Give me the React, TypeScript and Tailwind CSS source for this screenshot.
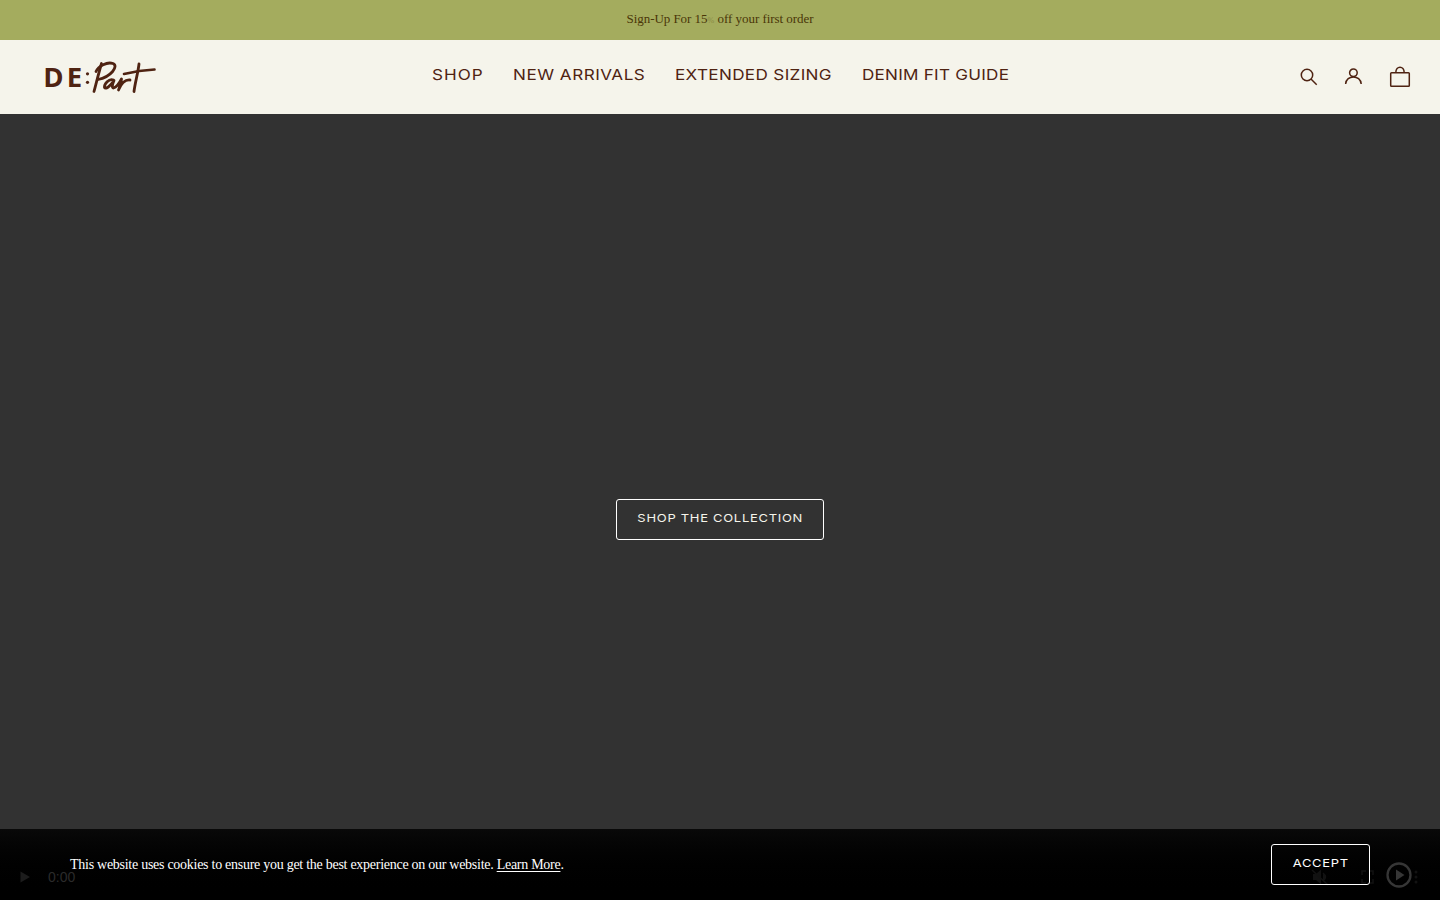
import type { ReactNode } from 'react';

const navLinks = [
  { label: 'SHOP', width: 'w-[51px]', tracking: 'tracking-[0.9px]' },
  { label: 'NEW ARRIVALS', width: 'w-[132px]', tracking: 'tracking-[0.44px]' },
  { label: 'EXTENDED SIZING', width: 'w-[157px]', tracking: 'tracking-[0.3px]' },
  { label: 'DENIM FIT GUIDE', width: 'w-[148px]', tracking: 'tracking-[0.21px]' },
];

function Logo() {
  return (
    <svg width="118" height="46" viewBox="40 54 118 46" fill="none" aria-label="DE:Part">
      <text x="43.3" y="87" fontSize="27.5" className="fill-[#4f2312] font-['Open_Sans'] font-bold">D</text>
      <text x="66.8" y="87" fontSize="27.5" className="fill-[#4f2312] font-['Open_Sans'] font-bold">E</text>
      <circle cx="87.5" cy="73.8" r="1.6" fill="#4f2312" />
      <circle cx="87.5" cy="82.3" r="1.6" fill="#4f2312" />
      <g stroke="#4f2312" strokeWidth="2.8" strokeLinecap="round" strokeLinejoin="round">
        <path d="M101.5 63.500C99 72 96.500 82 94 91.500" />
        <path d="M96 71.500C98.500 66 107 61.500 113 63.500C119 66 111 77 98 79.500" />
        <path d="M113.500 80C109 78 104 84 104.500 87.500C106 90 111 85 114 80.500C112.500 84 111.500 88 113.500 88C117 87 120 82 121.500 79C121 84 119.500 87 118.500 90C121 84 125 79.500 130 80" />
        <path d="M139 64C138 73 135 83 134 91.500" />
        <path d="M124 74C134 71.500 144 70 154.500 69.500" strokeWidth="2.6" />
      </g>
    </svg>
  );
}

function IconButton({ label, children }: { label: string; children: ReactNode }) {
  return (
    <button aria-label={label} className="flex h-6 w-6 items-center justify-center text-[#4f2312]">
      {children}
    </button>
  );
}

function Header() {
  return (
    <header className="grid h-[74px] grid-cols-[432px_1fr_auto] items-center bg-[#f5f4eb] pr-7">
      <a href="#" className="pl-10">
        <Logo />
      </a>
      <nav className="flex gap-[30px] pb-[5px]">
        {navLinks.map((link) => (
          <a
            key={link.label}
            href="#"
            className={`whitespace-nowrap font-['Inter',sans-serif] text-[15px] leading-6 text-[#4f2312] ${link.width}`}
          >
            <span className={`inline-block origin-left scale-x-114 ${link.tracking}`}>{link.label}</span>
          </a>
        ))}
      </nav>
      <div className="flex items-center">
        <IconButton label="Search">
          <svg width="24" height="24" viewBox="0 0 24 24" fill="none" stroke="currentColor" strokeWidth="1.5">
            <circle cx="10" cy="10" r="5.700" />
            <path d="M14 14L19.700 19.700" />
          </svg>
        </IconButton>
        <div className="ml-[21px] flex">
          <IconButton label="Account">
            <svg width="24" height="24" viewBox="0 0 24 24" fill="none" stroke="currentColor" strokeWidth="1.500">
              <circle cx="11.400" cy="7.800" r="3.800" />
              <path d="M3.600 19C4.200 9.500 18.600 9.500 19.200 19" />
            </svg>
          </IconButton>
        </div>
        <div className="ml-[22px] flex">
          <IconButton label="Cart">
            <svg width="24" height="24" viewBox="0 0 24 24" fill="none" stroke="currentColor" strokeWidth="1.500">
              <rect x="2.700" y="7.700" width="18.600" height="13.600" rx="0.800" />
              <path d="M7.800 7.700C7.800 .300 16.200 .300 16.200 7.700" />
            </svg>
          </IconButton>
        </div>
      </div>
    </header>
  );
}

function VideoControls() {
  return (
    <div className="absolute inset-x-0 bottom-0 flex h-12 items-center text-[#2b2b2b]">
      <svg width="1440" height="48" viewBox="0 852 1440 48" fill="currentColor" className="absolute inset-0">
        <path d="M20.500 871.500V882.500L30 877Z" fill="#1c1c1c" />
        <g fill="#121212">
          <path d="M1313 874H1316L1321 869.500V884.500L1316 880H1313Z" />
          <path d="M1312 870L1328 885M1323 873Q1328 877 1323 881" stroke="#121212" strokeWidth="1.500" />
          <circle cx="1416" cy="872" r="1.500" />
          <circle cx="1416" cy="877" r="1.500" />
          <circle cx="1416" cy="882" r="1.500" />
        </g>
        <path d="M1362 875V871H1366M1369 871H1373V875M1373 879V883H1369M1366 883H1362V879" fill="none" stroke="#121212" strokeWidth="1.500" />
      </svg>
      <span className="ml-12 mt-0.5 font-['Liberation_Sans',sans-serif] text-sm">0:00</span>
    </div>
  );
}

function CookieBar() {
  return (
    <div className="absolute inset-x-0 bottom-0 h-[71px] bg-linear-to-b from-[#090909] to-black">
      <VideoControls />
      <div className="relative flex h-full items-center justify-between px-[70px]">
        <p className="whitespace-nowrap font-['Liberation_Serif',serif] text-sm tracking-[-0.27px] text-white">
          This website uses cookies to ensure you get the best experience on our website.{' '}
          <a href="#" className="underline underline-offset-2">Learn More</a>.
        </p>
        <button className="flex h-[41px] w-[99px] items-center justify-center rounded-[3px] border border-white pb-0.5 font-['Inter',sans-serif] text-[11px] tracking-[0.6px] text-white">
          <span className="scale-x-118">ACCEPT</span>
        </button>
      </div>
      <button aria-label="Play video" className="absolute right-7 top-[33px]">
        <svg width="26" height="26" viewBox="0 0 26 26" className="text-[#363636]">
          <circle cx="13" cy="13" r="11.500" fill="none" stroke="currentColor" strokeWidth="2.300" />
          <path d="M10 7.500V18.500L18.500 13Z" fill="currentColor" />
        </svg>
      </button>
    </div>
  );
}

export default function App() {
  return (
    <div className="relative flex h-[900px] w-full flex-col overflow-hidden">
      <div className="flex h-10 items-center justify-center bg-[#a4ac5e] pb-0.5 font-['Liberation_Serif',serif] text-[13px] tracking-[-0.05px] text-[#4a3608]">
        <span className="whitespace-nowrap">
          Sign-Up For 15<span className="inline-block w-[7px] text-[8px] opacity-30">%</span> off your first order
        </span>
      </div>
      <Header />
      <main className="flex flex-1 justify-center bg-[#323232] pt-[385px]">
        <a
          href="#"
          className="flex h-[41px] w-52 items-center justify-center whitespace-nowrap rounded-[3px] border border-white pb-0.5 font-['Inter',sans-serif] text-[11px] tracking-[0.6px] text-[#f5f4eb]"
        >
          <span className="scale-x-118">SHOP THE COLLECTION</span>
        </a>
      </main>
      <CookieBar />
    </div>
  );
}
